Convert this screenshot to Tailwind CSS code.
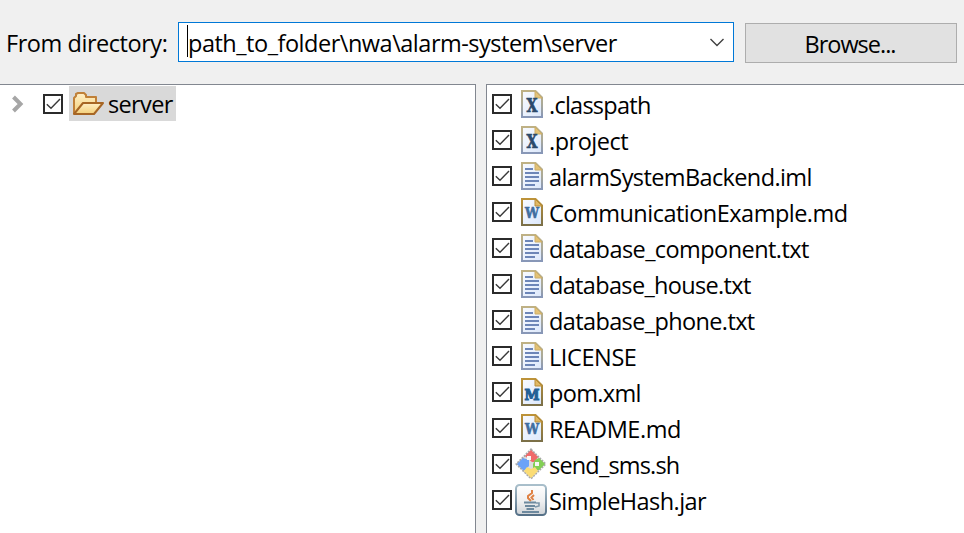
<!DOCTYPE html>
<html lang="en"><head><meta charset="utf-8"><title>Import from file system</title>
<script src="https://cdn.jsdelivr.net/npm/@tailwindcss/browser@4"></script>
</head>
<body class="flex h-[533px] w-[964px] flex-col overflow-hidden bg-[#f0f0f0] font-['Open_Sans','Noto_Sans',sans-serif] text-[23.5px] leading-8 whitespace-nowrap text-black">
<svg class="absolute size-0">
  <defs>
    <linearGradient id="tan" x2="0" y2="1"><stop offset="0" stop-color="#bfb184"/><stop offset=".5" stop-color="#aaa998"/><stop offset="1" stop-color="#8797b8"/></linearGradient>
    <linearGradient id="gold" x2="0" y2="1"><stop offset="0" stop-color="#bd9339"/><stop offset="1" stop-color="#7b7048"/></linearGradient>
    <linearGradient id="paper" x2="1" y2="1"><stop offset="0" stop-color="#f9fbff"/><stop offset="1" stop-color="#dce8fb"/></linearGradient>
    <linearGradient id="folder" x2="0" y2="1"><stop offset="0" stop-color="#fff0c8"/><stop offset="1" stop-color="#f4cf78"/></linearGradient>
    <linearGradient id="jarEdge" x2="0" y2="1"><stop offset="0" stop-color="#a9bfcb"/><stop offset="1" stop-color="#557087"/></linearGradient>
    <linearGradient id="jarFill" x2="0" y2="1"><stop offset="0" stop-color="#ffffff"/><stop offset=".55" stop-color="#eeeff0"/><stop offset="1" stop-color="#cfd3d7"/></linearGradient>
    <symbol id="check" viewBox="0 0 20 20"><path d="M1 1H19V19H1Z" fill="#fff" stroke="#2b2b2b" stroke-width="2"/><path d="M3.8 10.2L8 14.2L17 5" fill="none" stroke="#3a3a3a" stroke-width="1.4"/></symbol>
    <symbol id="page" viewBox="0 0 22 28"><path d="M1 1H14.5L21 7.5V27H1Z" fill="url(#paper)" stroke="url(#tan)" stroke-width="2"/><path d="M14 1V8H21Z" fill="#e3c277" stroke="#ccae69"/></symbol>
    <symbol id="goldpage" viewBox="0 0 22 28"><path d="M1 1H14.5L21 7.5V27H1Z" fill="url(#paper)" stroke="url(#gold)" stroke-width="2"/><path d="M14 1V8H21Z" fill="#e0b967" stroke="#b98d38"/></symbol>
    <symbol id="text" viewBox="0 0 22 28"><use href="#page"/><path d="M4 7H12M4 11H18M4 15H18M4 19H18M4 23H14" stroke="#6d86b8" stroke-width="1.8"/></symbol>
    <symbol id="xfile" viewBox="0 0 22 28"><use href="#page"/><text x="11" y="22" text-anchor="middle" font-family="DejaVu Serif" font-weight="bold" font-size="18.5" textLength="11" lengthAdjust="spacingAndGlyphs" fill="#2b4a6b" stroke="#2b4a6b" stroke-width=".7">X</text></symbol>
    <symbol id="wfile" viewBox="0 0 22 28"><use href="#goldpage"/><text x="11" y="20" text-anchor="middle" font-family="DejaVu Serif" font-weight="bold" font-size="14" textLength="14" lengthAdjust="spacingAndGlyphs" fill="#416e9f" stroke="#416e9f" stroke-width=".6">W</text></symbol>
    <symbol id="mfile" viewBox="0 0 22 28"><use href="#goldpage"/><text x="11" y="22" text-anchor="middle" font-family="DejaVu Serif" font-weight="bold" font-size="15" textLength="15" lengthAdjust="spacingAndGlyphs" fill="#236096" stroke="#236096" stroke-width="1">M</text></symbol>
    <symbol id="git" viewBox="0 0 32 32">
      <path d="M16 1.5L30.5 16L16 30.5L1.5 16Z" fill="#dcdcdc" stroke="#a8a8a8" stroke-width="2" stroke-dasharray="2 1"/>
      <path d="M16 2L23 9L21 12V14H17L10 8Z" fill="#f06b6b"/>
      <path d="M2 16L8 10L14 12V18L10 22H8Z" fill="#6ba2f8"/>
      <path d="M30 16L24 10L20 12L18 16V20L22 22H24Z" fill="#83cf55"/>
      <path d="M16 30L9 23L12 19L16 21L20 19L23 23Z" fill="#fbdc75"/>
      <path d="M12 8H16V12H12ZM20 14H24V18H20Z" fill="#f6f6f6"/>
    </symbol>
    <symbol id="jar" viewBox="0 0 32 32">
      <rect x="1" y="1" width="30" height="30" rx="3.5" fill="url(#jarFill)" stroke="url(#jarEdge)" stroke-width="2"/>
      <path d="M17 6V9L13 12V14L16 17M19 11L16.5 13.5L18.5 16" fill="none" stroke="#df8143" stroke-width="2"/>
      <path d="M9 18.5H21M10 22H20M11.5 25H19M7 28H24" stroke="#6d899e" stroke-width="2"/><path d="M21 19H24V22L20 23" fill="none" stroke="#7d96a9" stroke-width="1.6"/>
    </symbol>
  </defs>
</svg>
<header class="flex h-[84px] shrink-0 items-start pt-[22px]">
  <label class="w-[171px] pt-[5px] pl-[6px] tracking-[-0.45px]">From directory:</label>
  <div class="ml-[7px] flex h-10 w-[556px] items-start border border-[#0078d7] bg-white pr-2 pl-2">
    <span class="mt-[2px] h-8 w-px bg-black"></span>
    <span class="flex-1 pt-[4px] tracking-[-0.48px]">path_to_folder\nwa\alarm-system\server</span>
    <svg class="mt-[14px] h-3 w-4" viewBox="0 0 16 12" fill="none" stroke="#404040" stroke-width="1.4"><path d="M1.5 2L8 8.5L14.5 2"/></svg>
  </div>
  <button class="mt-px ml-[11px] h-10 w-[212px] border border-[#adadad] bg-[#e1e1e1] pt-[2px] pr-[2px] tracking-[-1px]">Browse...</button>
</header>
<main class="flex min-h-0 flex-1">
  <section class="w-[476px] border-t border-r border-[#828790] bg-white pt-px">
    <div class="flex h-9 items-center pl-3">
      <svg class="mb-px h-[18px] w-3" viewBox="0 0 12 18" fill="none" stroke="#a6a6a6" stroke-width="4"><path d="M1.5 2L8.5 9L1.5 16"/></svg>
      <svg class="ml-[19px] size-5"><use href="#check"/></svg>
      <div class="ml-[6px] flex h-[35px] w-[107px] -translate-y-px items-center bg-[#d9d9d9] pl-[3px]">
        <svg class="mt-[2px] h-6 w-8" viewBox="0 0 32 24" fill="url(#folder)" stroke="#c08038" stroke-width="2" stroke-linejoin="round"><path d="M2 22V6L4 4V2L6 1H12L14 3V5H24V11"/><path d="M2 22L11 11H31L22 22Z" stroke="#a76625"/></svg>
        <span class="ml-[4px] pt-[2px] tracking-[-0.65px]">server</span>
      </div>
    </div>
  </section>
  <ul id="files" class="ml-[10px] flex-1 border-t border-l border-[#828790] bg-white pt-px"></ul>
</main>
<script>
// name, icon, letter spacing in px
const files = [
  ['.classpath','xfile',-0.75],['.project','xfile',-0.5],['alarmSystemBackend.iml','text',-0.61],
  ['CommunicationExample.md','wfile',-0.51],['database_component.txt','text',-0.57],['database_house.txt','text',-0.66],
  ['database_phone.txt','text',-0.62],['LICENSE','text',-0.4],['pom.xml','mfile',-0.65],
  ['README.md','wfile',-0.45],['send_sms.sh','git',-0.82],['SimpleHash.jar','jar',-0.55]
];
document.getElementById('files').innerHTML = files.map(([name, icon, ls]) => {
  const size = icon === 'git' || icon === 'jar' ? 'size-8' : 'ml-[2px] h-7 w-[22px]';
  return `<li class="flex h-9 items-center pl-[5px]"><svg class="size-5"><use href="#check"/></svg>
  <span class="ml-[3px] flex w-8 justify-center"><svg class="${size}"><use href="#${icon}"/></svg></span>
  <span class="ml-[2px] pt-[2px]" style="letter-spacing:${ls}px">${name}</span></li>`;
}).join('');
</script>
</body></html>
